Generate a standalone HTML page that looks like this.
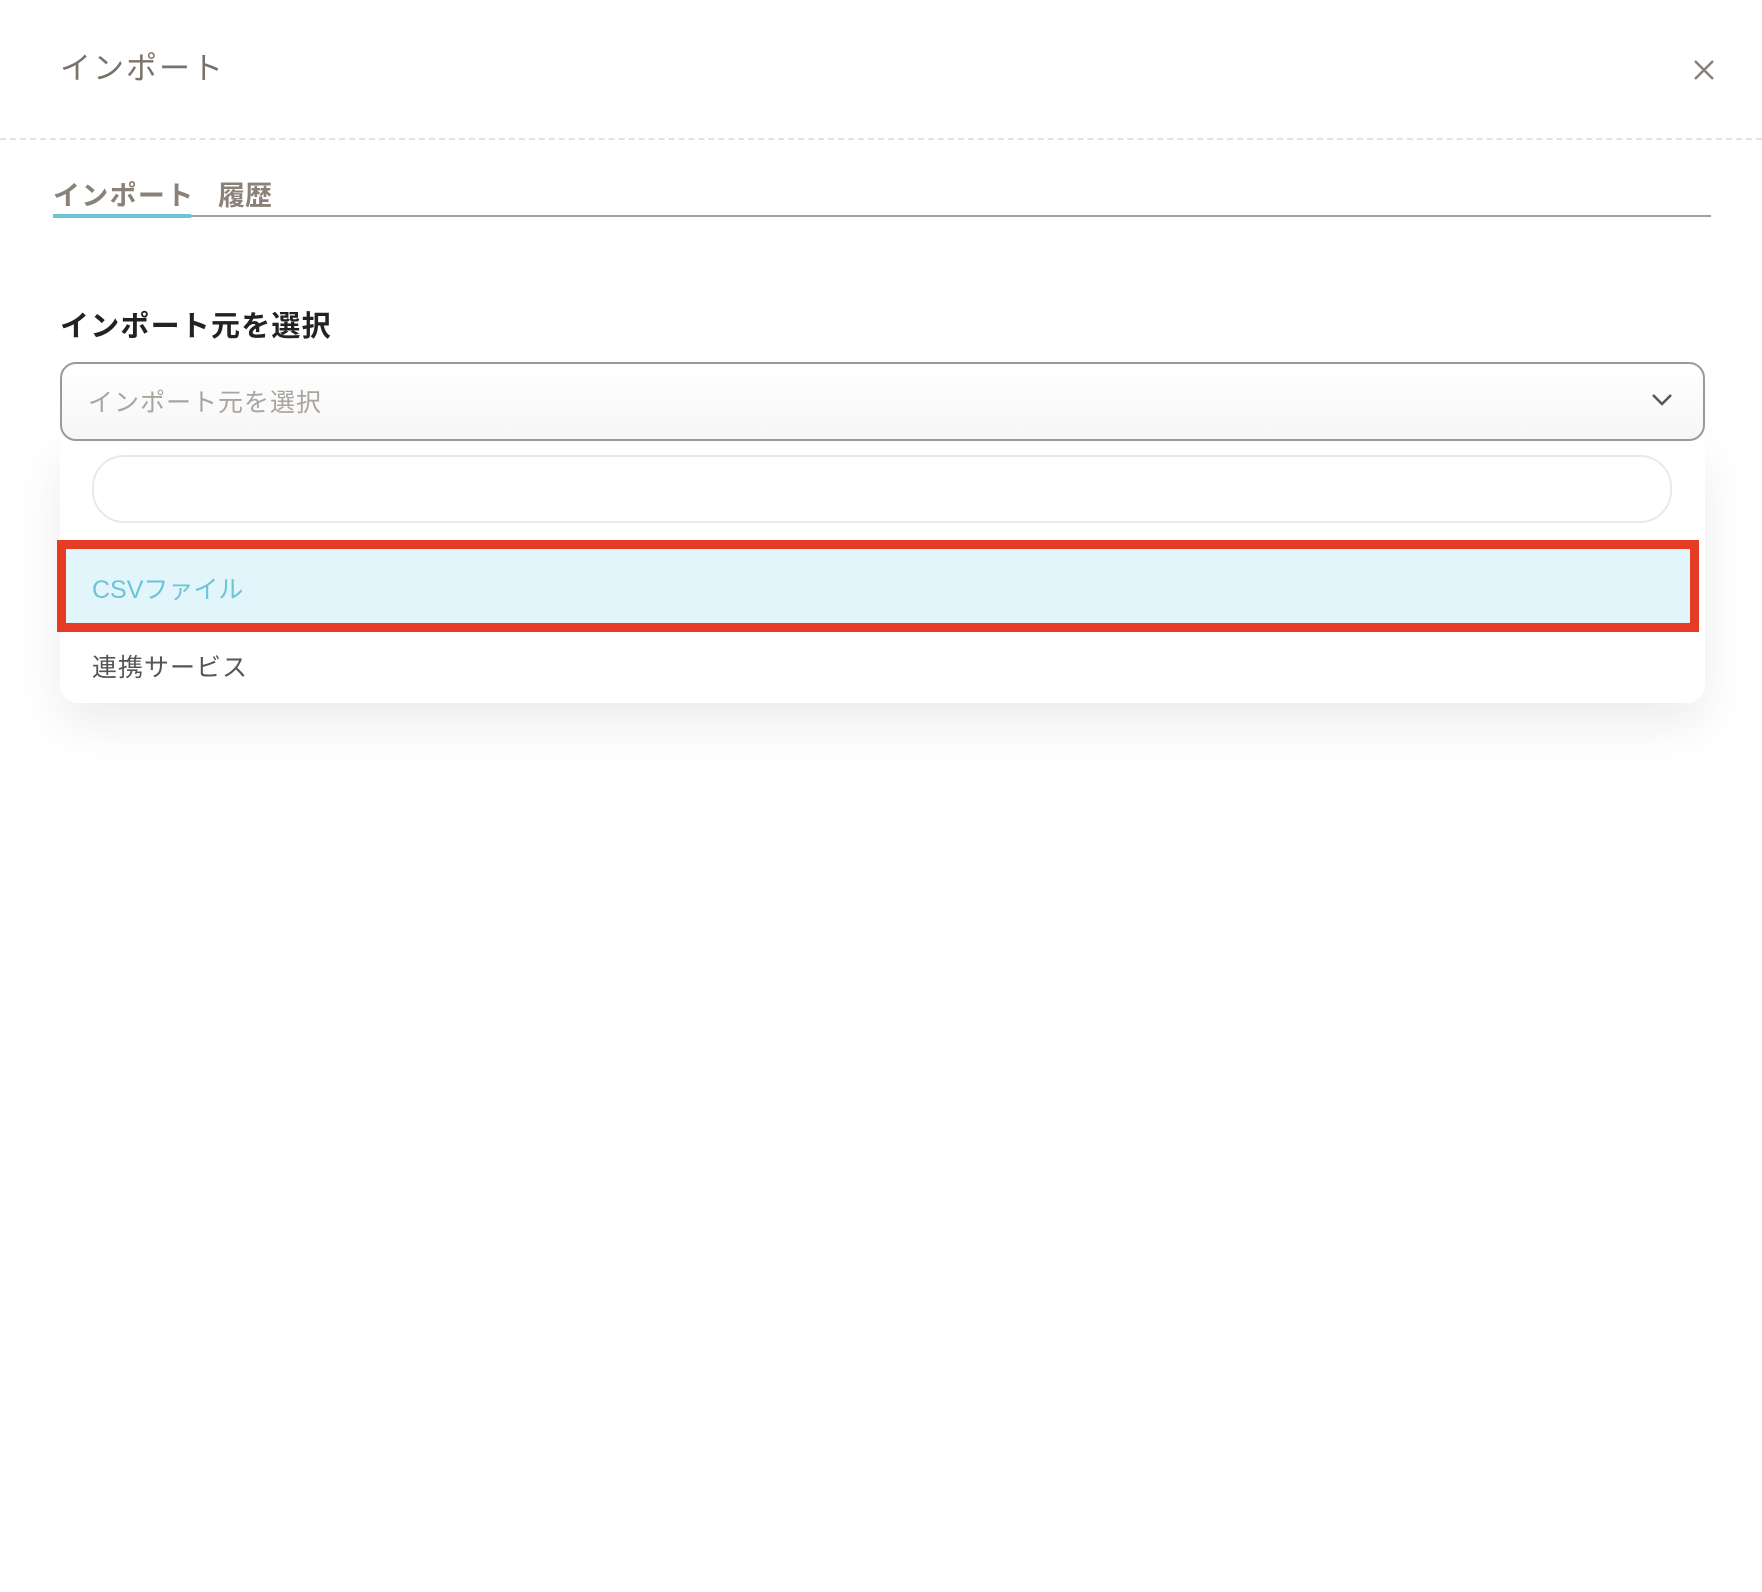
<!DOCTYPE html>
<html><head><meta charset="utf-8"><style>
body{margin:0;width:1762px;height:1592px;background:#fff;font-family:"Liberation Sans","Noto Sans CJK JP",sans-serif;position:relative;overflow:hidden}
.a{position:absolute;white-space:nowrap}
</style></head><body>
<div class="a" style="left:60px;top:49px;font-size:31px;letter-spacing:2px;color:#7a7268;line-height:40px">インポート</div>
<svg class="a" style="left:1692px;top:58px" width="24" height="24"><path d="M3 3L21 21M21 3L3 21" stroke="#8a8278" stroke-width="2.5"/></svg>
<div class="a" style="left:0;top:138px;width:1762px;border-top:2px dashed #e2e2e2"></div>
<div class="a" style="left:53px;top:178px;font-size:27px;letter-spacing:1.3px;font-weight:bold;color:#8a8278;line-height:36px">インポート</div>
<div class="a" style="left:218px;top:178px;font-size:27px;font-weight:bold;color:#8a8278;line-height:36px">履歴</div>
<div class="a" style="left:53px;top:215px;width:1658px;height:2px;background:#a0a0a0"></div>
<div class="a" style="left:53px;top:214px;width:138px;height:4px;background:#6cc4d8"></div>
<div class="a" style="left:60px;top:308px;font-size:29px;letter-spacing:1.2px;font-weight:bold;color:#222;line-height:38px">インポート元を選択</div>
<div class="a" style="left:60px;top:439px;width:1645px;height:264px;background:#fff;border-radius:0 0 18px 18px;box-shadow:0 20px 50px rgba(0,0,0,0.08)"></div>
<div class="a" style="left:60px;top:362px;width:1641px;height:75px;border:2px solid #9a9a9a;border-radius:16px;background:linear-gradient(#fff,#f6f6f8)"></div>
<div class="a" style="left:88px;top:386px;font-size:25px;letter-spacing:1px;color:#aaa49c;line-height:34px">インポート元を選択</div>
<svg class="a" style="left:1650px;top:390px" width="24" height="20"><path d="M3 5L12 14L21 5" stroke="#555" stroke-width="2.5" fill="none"/></svg>
<div class="a" style="left:92px;top:455px;width:1576px;height:64px;border:2px solid #eee8e2;border-radius:32px"></div>
<div class="a" style="left:57px;top:540px;width:1624px;height:74px;border:9px solid #e63c25;background:#e1f5fa"></div>
<div class="a" style="left:92px;top:573px;font-size:25px;color:#6cc4d8;line-height:34px">CSVファイル</div>
<div class="a" style="left:92px;top:651px;font-size:25px;letter-spacing:1px;color:#555;line-height:34px">連携サービス</div>
</body></html>
